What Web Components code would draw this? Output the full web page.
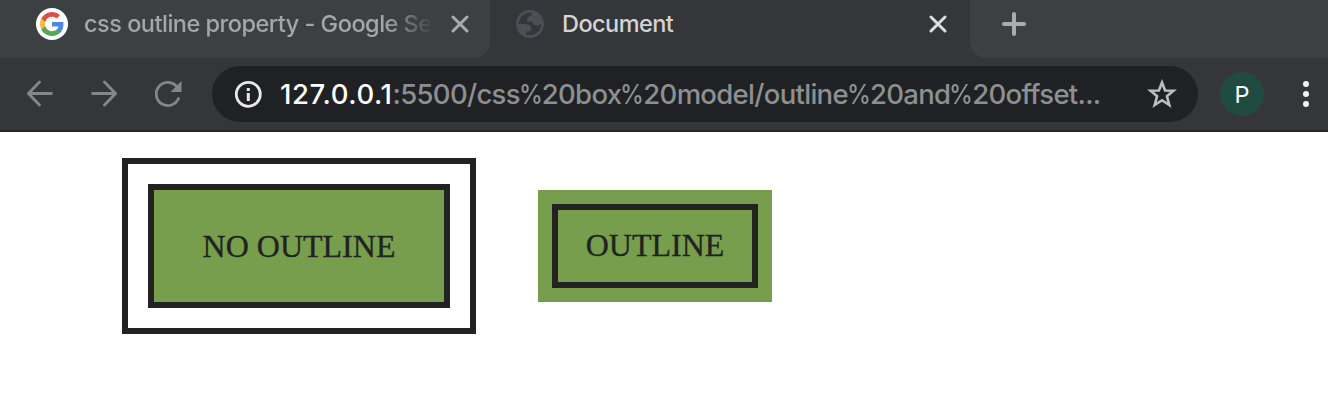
<!DOCTYPE html>
<html lang="en">
<head>
<meta charset="utf-8">
<title>Document</title>
<style>
body{margin:0;background:#fff;overflow:hidden}
</style>
</head>
<body>
<browser-window>
  <tab-strip slot="tabs"></tab-strip>
  <tool-bar slot="toolbar"></tool-bar>
  <demo-box variant="outside">NO OUTLINE</demo-box>
  <demo-box variant="inside">OUTLINE</demo-box>
</browser-window>
<script>
function define(name, html){
  customElements.define(name, class extends HTMLElement{
    constructor(){
      super();
      const t=document.createElement('template');
      t.innerHTML=html;
      this.attachShadow({mode:'open'}).append(t.content.cloneNode(true));
    }
  });
}

define('browser-window', `
<style>
:host{display:flex;flex-direction:column;width:1328px;height:402px;background:#fff}
main{display:flex;align-items:flex-start;padding:52px 0 0 148px;gap:88px}
</style>
<slot name="tabs"></slot><slot name="toolbar"></slot>
<main><slot></slot></main>`);

define('demo-box', `
<style>
:host{display:flex;box-sizing:border-box;align-items:center;justify-content:center;background:#769e4c;color:#222;font:32px/36px "Liberation Serif","Times New Roman",serif;white-space:nowrap;-webkit-text-stroke:.3px #222}
:host([variant=outside]){width:302px;height:124px;border:6px solid #222;outline:6px solid #222;outline-offset:20px}
:host([variant=inside]){width:234px;height:112px;margin-top:6px;padding-bottom:2px;outline:6px solid #222;outline-offset:-20px}
</style>
<slot></slot>`);

define('tab-strip', `
<style>
:host{display:flex;height:58px;background:#35363a;font:500 23.5px/48px Inter,sans-serif}
.tab{box-sizing:border-box;display:flex;align-items:center;height:58px;padding-bottom:10px}
.idle{width:490px;padding-left:36px;background:#3c4043;border-bottom-right-radius:16px;color:#a4a7a9}
.active{width:480px;padding-left:26px;color:#d4d4d4}
.new{flex:1;padding-left:32px;background:#3c4043;border-bottom-left-radius:16px}
svg{display:block;flex:none}
.idle tab-title{width:351px;margin:0 16px;-webkit-mask-image:linear-gradient(90deg,#000 300px,transparent 351px);mask-image:linear-gradient(90deg,#000 300px,transparent 351px)}
.active tab-title{width:351px;margin:0 16px 0 18px}
.active tab-title{--spacing:-.55px}
.idle tab-title{--spacing:-.5px}
</style>
<div class="tab idle">
<svg width="32" height="32" viewBox="0 0 32 32"><circle cx="16" cy="16" r="16" fill="#fff"/><g transform="translate(4 4)"><path fill="#4e86ec" d="M23.500 12.300c0-.8-.1-1.600-.2-2.300H12v4.400h6.500c-.3 1.500-1.100 2.800-2.400 3.600v3h3.900c2.200-2.100 3.500-5.100 3.500-8.700z"/><path fill="#58a65c" d="M12 24c3.200 0 5.900-1.100 8-2.900l-3.900-3c-1.100.7-2.500 1.200-4.100 1.200-3.100 0-5.800-2.100-6.700-5H1.300v3.100C3.300 21.300 7.300 24 12 24z"/><path fill="#f2be42" d="M5.300 14.300c-.5-1.500-.5-3.100 0-4.600V6.600H1.300a12 12 0 0 0 0 10.800z"/><path fill="#db5044" d="M12 4.800c1.700 0 3.300.6 4.600 1.800L20 3.200A12 12 0 0 0 1.300 6.600l4 3.100c.9-2.900 3.600-4.900 6.700-4.900z"/></g></svg>
<tab-title>css outline property - Google Sea</tab-title>
<svg width="18" height="18" viewBox="0 0 18 18"><path d="M2 2 16 16M16 2 2 16" stroke="#a9acae" stroke-width="3" stroke-linecap="round"/></svg>
</div>
<div class="tab active">
<svg width="28" height="28" viewBox="2 2 20 20"><path fill="#4c5054" fill-rule="evenodd" d="M12 2C6.480 2 2 6.480 2 12s4.480 10 10 10 10-4.480 10-10S17.520 2 12 2zM4 12h4.400c3.407.022 4.922 1.730 4.543 5.127H9.488v2.470a8.004 8.004 0 0 0 10.498-8.083C19.327 12.504 18.332 13 17 13c-2.137 0-3.206-.916-3.206-2.750h-3.748c-.274-2.728.683-4.092 2.870-4.092 0-.975.327-1.597.811-1.970A8.004 8.004 0 0 0 4 12z"/></svg>
<tab-title>Document</tab-title>
<svg width="18" height="18" viewBox="0 0 18 18"><path d="M2 2 16 16M16 2 2 16" stroke="#dedede" stroke-width="3" stroke-linecap="round"/></svg>
</div>
<div class="tab new"><svg width="24" height="24" viewBox="0 0 24 24"><path d="M12 2V22M2 12H22" stroke="#a9acae" stroke-width="4" stroke-linecap="round"/></svg></div>`);

define('tab-title', `
<style>:host{display:block;white-space:nowrap;flex:none;letter-spacing:var(--spacing)}</style><slot></slot>`);

define('tool-bar', `
<style>
:host{display:flex;box-sizing:border-box;height:74px;align-items:center;padding:0 0 0 26px;background:#35363a;border-bottom:2px solid #282325}
svg{display:block;flex:none}
.nav{display:flex;gap:38px;width:186px}
.avatar{width:44px;height:44px;border-radius:50%;background:#204b40;color:#fff;font:400 23.500px/45px Inter,sans-serif;text-align:center;margin:0 39px 0 22px}
</style>
<div class="nav">
<svg width="27" height="28" viewBox="0 0 27 28"><path d="M25.500 13.500H3M13.500 2 2.500 13.500 13.500 25" fill="none" stroke="#858688" stroke-width="2.800" stroke-linecap="round"/></svg>
<svg width="26" height="28" viewBox="0 0 26 28"><path d="M1.500 13.500H24M13.500 2 24.500 13.500 13.500 25" fill="none" stroke="#858688" stroke-width="2.800" stroke-linecap="round"/></svg>
<svg width="28" height="28" viewBox="0 0 28 28"><path d="M21 5.700A11.600 11.600 0 1 0 23.500 18.500" fill="none" stroke="#858688" stroke-width="2.800" stroke-linecap="round"/><path d="M26.500 1V12H15.500Z" fill="#858688"/></svg>
</div>
<address-bar></address-bar>
<div class="avatar">P</div>
<svg width="6" height="26" viewBox="0 0 6 26" fill="#f1f3f4"><circle cx="3" cy="3" r="3"/><circle cx="3" cy="13" r="3"/><circle cx="3" cy="23" r="3"/></svg>`);

define('address-bar', `
<style>
:host{display:flex;flex:none;box-sizing:border-box;width:986px;height:56px;align-items:center;padding:0 20px 0 22px;border-radius:28px;background:#202124;color:#8e8f91;font:500 27.500px/56px Inter,sans-serif}
svg{display:block;flex:none}
.url{width:848px;margin:0 19px 0 18px;white-space:nowrap;letter-spacing:-.7px}
b{font-weight:500;color:#fff;letter-spacing:.6px}
i{display:inline-block;width:23px;margin-left:-1px;font-style:normal;transform:scaleX(.88);transform-origin:0 50%}
</style>
<svg width="28" height="28" viewBox="0 0 28 28"><circle cx="14.300" cy="14.300" r="12" fill="none" stroke="#e8e8e8" stroke-width="2.800"/><path d="M12.800 8h3v3h-3zM12.800 13h3v8h-3z" fill="#e8e8e8"/></svg>
<div class="url"><b>127.0.0.1</b><span>:5500/css<i>%</i>20box<i>%</i>20model/outline<i>%</i>20and<i>%</i>20offset...</span></div>
<svg width="30" height="30" viewBox="0 0 30 30"><path d="M15 3.500 18.100 11.500 26.500 11.800 19.900 17.200 22.300 26 15 21.200 7.700 26 10.100 17.200 3.500 11.800 11.900 11.500Z" fill="none" stroke="#bdbdbe" stroke-width="2.600"/></svg>`);
</script>
</body>
</html>
